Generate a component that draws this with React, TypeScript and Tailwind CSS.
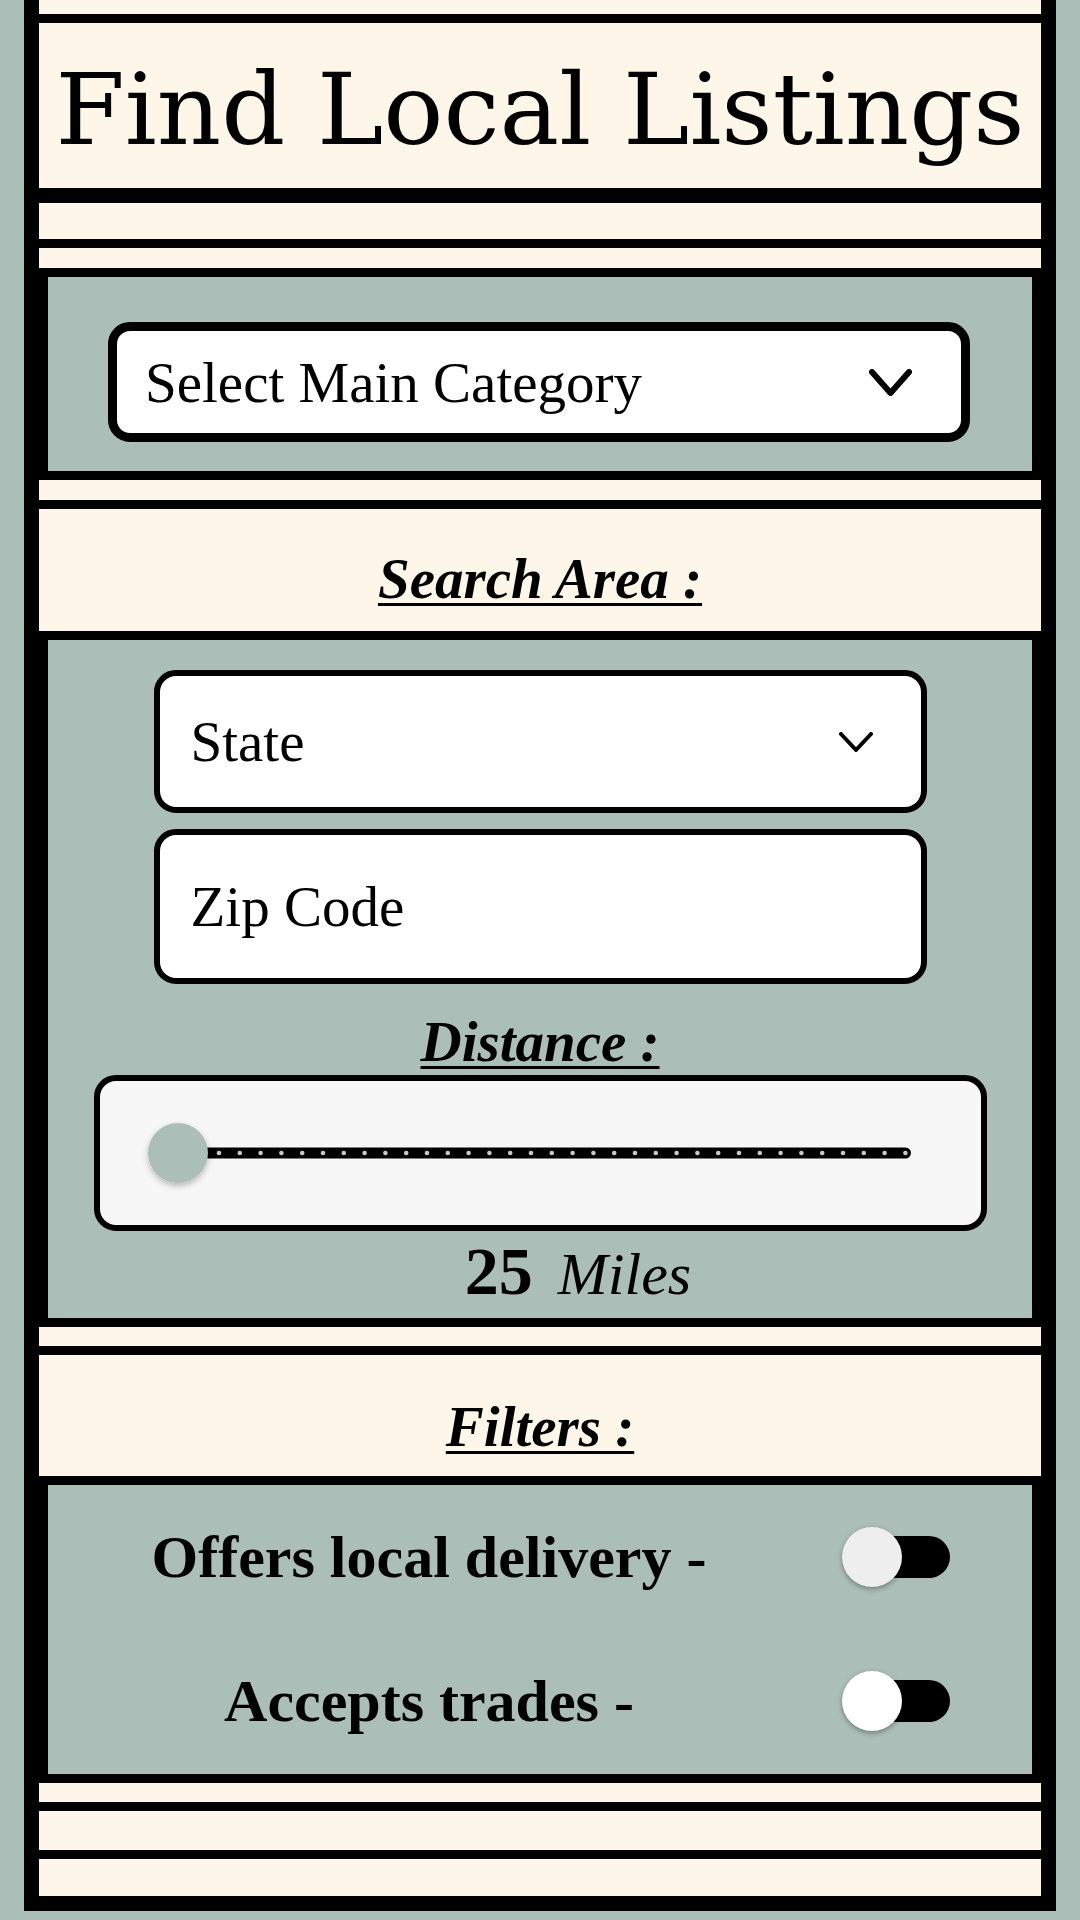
import React from "react";

function Chevron({ w, h, sw }: { w: number; h: number; sw: number }) {
  const i = sw / 2;
  return (
    <svg width={w} height={h} viewBox={`0 0 ${w} ${h}`} fill="none">
      <polyline
        points={`${i},${i} ${w / 2},${h - i} ${w - i},${i}`}
        stroke="#000"
        strokeWidth={sw}
        strokeLinecap="round"
        strokeLinejoin="round"
      />
    </svg>
  );
}

function Toggle({ light }: { light: boolean }) {
  return (
    <div className="relative w-[105px] h-[42px] rounded-full bg-black shrink-0">
      <div
        className={
          light
            ? "absolute left-[-3px] top-[-9px] w-[60px] h-[60px] rounded-full bg-[#eeeeee] shadow-[0_2px_5px_rgba(0,0,0,0.35)]"
            : "absolute left-[-3px] top-[-9px] w-[60px] h-[60px] rounded-full bg-white shadow-[0_2px_5px_rgba(0,0,0,0.35)]"
        }
      />
    </div>
  );
}

function Slider() {
  const dots: number[] = [];
  for (let x = 119; x <= 806; x += 20.8) dots.push(x);
  return (
    <svg width={881} height={144} viewBox="0 0 881 144">
      <defs>
        <filter id="sh" x="-50%" y="-50%" width="200%" height="200%">
          <feDropShadow dx="0" dy="3" stdDeviation="3" floodColor="#000" floodOpacity="0.25" />
        </filter>
      </defs>
      <rect x={78} y={66.5} width={733} height={11} rx={5.5} fill="#000" />
      {dots.map((x, i) => (
        <circle key={i} cx={x} cy={72} r={2.3} fill="#c9c9c9" />
      ))}
      <circle cx={78} cy={72} r={30} fill="#abbeb7" filter="url(#sh)" />
    </svg>
  );
}

export default function App() {
  return (
    <div className="w-[1080px] h-[1920px] bg-[#abbeb7] px-[24px] font-['Liberation_Serif',serif] text-black">
      <div className="h-[1911px] border-x-[15px] border-b-[15px] border-black bg-[#fdf6e9] flex flex-col">
        <div className="h-[14px]" />
        <div className="h-[9px] bg-black" />
        <div className="h-[165px] pt-[37px] text-center">
          <h1 className="font-['DejaVu_Serif',serif] text-[100px] leading-none whitespace-nowrap">
            Find Local Listings
          </h1>
        </div>
        <div className="h-[15px] bg-black" />
        <div className="h-[36px]" />
        <div className="h-[9px] bg-black" />
        <div className="h-[20px]" />

        {/* Section 1 */}
        <div className="h-[212px] border-[9px] border-black bg-[#abbeb7] pt-[45px] pl-[60px]">
          <div className="w-[862px] h-[120px] border-[9px] border-black rounded-[22px] bg-white flex items-center justify-between pl-[28px] pr-[49px]">
            <span className="text-[57px] leading-none whitespace-nowrap">Select Main Category</span>
            <Chevron w={43} h={27} sw={6} />
          </div>
        </div>

        <div className="h-[20px]" />
        <div className="h-[9px] bg-black" />
        <div className="h-[122px] pt-[41px] text-center">
          <span className="text-[57px] leading-none font-bold italic underline decoration-[3px] underline-offset-[5px]">
            Search Area :
          </span>
        </div>

        {/* Section 2 */}
        <div className="h-[696px] border-[9px] border-black bg-[#abbeb7] flex flex-col items-center pt-[30px]">
          <div className="w-[773px] h-[143px] shrink-0 border-[6px] border-black rounded-[22px] bg-white flex items-center justify-between pl-[31px] pr-[48px]">
            <span className="text-[57px] leading-none">State</span>
            <Chevron w={34} h={20} sw={4} />
          </div>
          <div className="w-[773px] h-[155px] shrink-0 mt-[16px] border-[6px] border-black rounded-[22px] bg-white flex items-center pl-[31px]">
            <span className="text-[57px] leading-none">Zip Code</span>
          </div>
          <div className="h-[91px] shrink-0 pt-[29px]">
            <span className="text-[57px] leading-none font-bold italic underline decoration-[3px] underline-offset-[5px]">
              Distance :
            </span>
          </div>
          <div className="w-[893px] h-[156px] shrink-0 border-[6px] border-black rounded-[22px] bg-[#f7f7f8] flex items-center">
            <Slider />
          </div>
          <div className="h-[87px] shrink-0 w-full flex items-baseline justify-center pl-[76px] pt-[6px] gap-[25px]">
            <span className="text-[68px] leading-none font-bold">25</span>
            <span className="text-[60px] leading-none italic">Miles</span>
          </div>
        </div>

        <div className="h-[19px]" />
        <div className="h-[9px] bg-black" />
        <div className="h-[121px] pt-[43px] text-center">
          <span className="text-[57px] leading-none font-bold italic underline decoration-[3px] underline-offset-[5px]">
            Filters :
          </span>
        </div>

        {/* Section 3 */}
        <div className="h-[307px] border-[9px] border-black bg-[#abbeb7] flex flex-col">
          <div className="h-[144px] flex items-center">
            <div className="w-[762px] text-center text-[60px] leading-none font-bold whitespace-nowrap">
              Offers local delivery -
            </div>
            <div className="ml-[35px]">
              <Toggle light={true} />
            </div>
          </div>
          <div className="h-[144px] flex items-center">
            <div className="w-[762px] text-center text-[60px] leading-none font-bold whitespace-nowrap">
              Accepts trades -
            </div>
            <div className="ml-[35px]">
              <Toggle light={false} />
            </div>
          </div>
        </div>

        <div className="h-[19px]" />
        <div className="h-[9px] bg-black" />
        <div className="h-[39px]" />
        <div className="h-[9px] bg-black" />
        <div className="h-[37px]" />
      </div>
    </div>
  );
}
